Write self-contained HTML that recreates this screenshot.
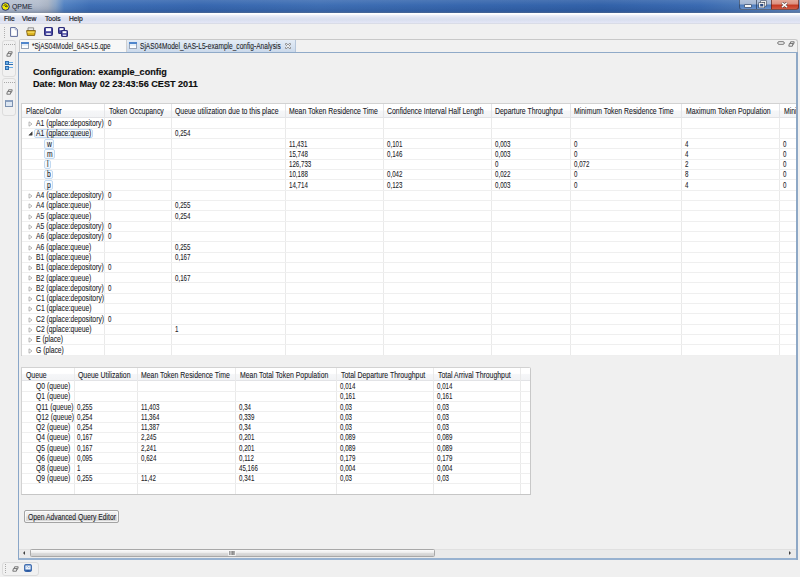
<!DOCTYPE html><html><head><meta charset="utf-8"><style>
*{margin:0;padding:0;box-sizing:border-box}
html,body{width:800px;height:577px;overflow:hidden;background:#f0f0f0;font-family:"Liberation Sans",sans-serif;color:#1c1c1c}
div,span{position:absolute;white-space:nowrap}
.t,.h,.n{font-size:8px;line-height:8px;color:#1c1c26;-webkit-text-stroke:0.08px #1c1c26;transform-origin:0 0;transform:scale(0.845,1.1)}
.n{transform:scale(0.77,1.1)}
.h{transform:scale(0.862,1.1)}
.h{color:#1a1a28}
.vl{width:1px;background:#ebebeb}
.hl{height:1px;background:#ececec}
</style></head><body>
<div style="left:0;top:0;width:800px;height:12.6px;background:linear-gradient(90deg,#b9c3d3 0,#b3bdcd 38px,#a9b3c3 48px,#86a2c6 56px,#5282c2 64px,#3e6fb6 90px,#3868b0 200px,#3f6fb4 320px,#3767ae 460px,#3262a9 600px,#3b6bb2 700px,#4a78b8 740px,#6a90c4 800px)"></div>
<div style="left:0;top:0;width:800px;height:12.6px;background:linear-gradient(rgba(255,255,255,0.10) 0,rgba(255,255,255,0) 40%,rgba(0,20,60,0.08) 70%,rgba(0,30,90,0.18) 85%,rgba(90,100,120,0.5) 100%)"></div>
<svg style="position:absolute;left:0.5px;top:1.5px" width="9" height="9" viewBox="0 0 9 9"><circle cx="4.5" cy="4.5" r="3.8" fill="#f0e800" stroke="#1c2a78" stroke-width="1"/><path d="M2.6 3.6 Q4 2.2 5.6 3.2 L6.4 4.6 Q5 5.2 4 4.2" fill="none" stroke="#3a3a10" stroke-width="0.9"/></svg>
<div style="left:12px;top:1.6px;font-size:8px;line-height:9px;color:#1e2838;-webkit-text-stroke:0.1px #1e2838;transform-origin:0 0;transform:scaleX(0.86)">QPME</div>
<div style="left:739px;top:0;width:16.5px;height:9.5px;border:1px solid rgba(30,45,70,0.6);border-top:0;border-right:0;border-radius:0 0 0 3px;background:linear-gradient(#b2c2da 0,#a6b8d4 45%,#4e7cbc 55%,#6a92cc 100%)"></div>
<div style="left:755.5px;top:0;width:15.5px;height:9.5px;border:1px solid rgba(30,45,70,0.6);border-top:0;border-right:0;background:linear-gradient(#b2c2da 0,#a6b8d4 45%,#4e7cbc 55%,#6a92cc 100%)"></div>
<div style="left:771px;top:0;width:27.5px;height:9.5px;border:1px solid rgba(70,30,30,0.65);border-top:0;border-radius:0 0 3px 0;background:linear-gradient(#e4a898 0,#dc9080 45%,#c43820 56%,#d05a44 100%)"></div>
<div style="left:744.5px;top:4.5px;width:6px;height:2.2px;background:#f6f6f6;box-shadow:0 0 0 0.6px #4a5060"></div>
<svg style="position:absolute;left:758px;top:0px" width="10" height="9" viewBox="0 0 10 9"><rect x="3.4" y="1.6" width="4.2" height="3.6" fill="none" stroke="#3c4454" stroke-width="2.2"/><rect x="3.4" y="1.6" width="4.2" height="3.6" fill="none" stroke="#f4f4f4" stroke-width="1.1"/><rect x="1.6" y="3.4" width="4.2" height="3.6" fill="#3c4454" stroke="#3c4454" stroke-width="2.2"/><rect x="1.6" y="3.4" width="4.2" height="3.6" fill="#2c4c84" stroke="#f4f4f4" stroke-width="1.1"/></svg>
<svg style="position:absolute;left:781px;top:1.5px" width="7" height="6" viewBox="0 0 7 6"><path d="M1 0.8L6 5.2M6 0.8L1 5.2" stroke="#503030" stroke-width="2.6"/><path d="M1 0.8L6 5.2M6 0.8L1 5.2" stroke="#fafafa" stroke-width="1.6"/></svg>
<div style="left:0;top:12.6px;width:800px;height:11.2px;background:linear-gradient(#ffffff 0,#ffffff 1.3px,#eef0f8 2px,#dde2f1 45%,#d9dfef 62%,#e3e6f5 86%,#d4d7e0 100%)"></div>
<div class="t" style="left:4px;top:15.1px;transform:scale(0.84,1.0);-webkit-text-stroke:0.2px #1c1c26">File</div>
<div class="t" style="left:22px;top:15.1px;transform:scale(0.84,1.0);-webkit-text-stroke:0.2px #1c1c26">View</div>
<div class="t" style="left:45px;top:15.1px;transform:scale(0.84,1.0);-webkit-text-stroke:0.2px #1c1c26">Tools</div>
<div class="t" style="left:69px;top:15.1px;transform:scale(0.84,1.0);-webkit-text-stroke:0.2px #1c1c26">Help</div>
<div style="left:3.5px;top:26.5px;width:1px;height:1px;background:#b0b0b0"></div>
<div style="left:3.5px;top:28.5px;width:1px;height:1px;background:#b0b0b0"></div>
<div style="left:3.5px;top:30.5px;width:1px;height:1px;background:#b0b0b0"></div>
<div style="left:3.5px;top:32.5px;width:1px;height:1px;background:#b0b0b0"></div>
<div style="left:3.5px;top:34.5px;width:1px;height:1px;background:#b0b0b0"></div>
<div style="left:3.5px;top:36.5px;width:1px;height:1px;background:#b0b0b0"></div>
<svg style="position:absolute;left:10px;top:26.5px" width="8" height="10" viewBox="0 0 8 10"><path d="M0.6 0.6H5.4L7.4 2.6V9.4H0.6Z" fill="#fdfdfd" stroke="#5c6a9a" stroke-width="1"/><path d="M5.2 0.8V2.8H7.2" fill="none" stroke="#8a94b8" stroke-width="0.7"/></svg>
<svg style="position:absolute;left:26px;top:26.5px" width="10" height="9" viewBox="0 0 10 9"><path d="M2 0.8H7.6V4H2Z" fill="#e8e8e8" stroke="#7a7a7a" stroke-width="0.8"/><path d="M0.6 3.6H9.4L8.6 8.4H1.4Z" fill="#e0b820" stroke="#7a5a10" stroke-width="0.9"/><path d="M1.4 5.2H8.6" stroke="#f8e070" stroke-width="1"/></svg>
<svg style="position:absolute;left:44px;top:26.5px" width="9" height="9" viewBox="0 0 9 9"><rect x="0.5" y="0.5" width="8" height="8" rx="0.8" fill="#4848a0" stroke="#2a2a78" stroke-width="1"/><rect x="2" y="1.2" width="5" height="3" fill="#ffffff"/><rect x="2.2" y="6" width="4.6" height="2" fill="#d8d8ec"/></svg>
<svg style="position:absolute;left:57.5px;top:26.5px" width="10" height="10" viewBox="0 0 10 10"><rect x="0.5" y="0.5" width="6" height="6" rx="0.6" fill="#4848a0" stroke="#2a2a78" stroke-width="1"/><rect x="1.6" y="1.2" width="3.8" height="2" fill="#fff"/><rect x="3.5" y="3.5" width="6" height="6" rx="0.6" fill="#4848a0" stroke="#2a2a78" stroke-width="1"/><rect x="4.6" y="4.2" width="3.8" height="2" fill="#fff"/><rect x="4.8" y="7.6" width="3.4" height="1.4" fill="#d8d8ec"/></svg>
<div style="left:1.5px;top:40px;width:14.5px;height:36.5px;border:1px solid #dcdcdc;border-radius:3px;background:#f1f1f1"></div>
<div style="left:4px;top:43.5px;width:1px;height:1px;background:#a8a8a8"></div>
<div style="left:6px;top:43.5px;width:1px;height:1px;background:#a8a8a8"></div>
<div style="left:8px;top:43.5px;width:1px;height:1px;background:#a8a8a8"></div>
<div style="left:10px;top:43.5px;width:1px;height:1px;background:#a8a8a8"></div>
<div style="left:12px;top:43.5px;width:1px;height:1px;background:#a8a8a8"></div>
<div style="left:14px;top:43.5px;width:1px;height:1px;background:#a8a8a8"></div>
<svg style="position:absolute;left:5.5px;top:51px" width="7" height="6" viewBox="0 0 7 6"><path d="M2.6 0.8H6.2L5.6 3.2H2Z" fill="#f4f4f4" stroke="#6a6a6a" stroke-width="0.9" stroke-linejoin="round"/><path d="M1.4 2.6H5L4.4 5.2H0.8Z" fill="#f4f4f4" stroke="#6a6a6a" stroke-width="0.9" stroke-linejoin="round"/></svg>
<div style="left:5px;top:61px;width:3.5px;height:3.5px;background:#6aaee8;border:0.5px solid #2d6db0"></div><div style="left:5px;top:66px;width:3.5px;height:3.5px;background:#6aaee8;border:0.5px solid #2d6db0"></div><div style="left:9px;top:62px;width:4px;height:1px;background:#6aaee8"></div><div style="left:9px;top:64px;width:4px;height:1px;background:#2d6db0"></div><div style="left:9px;top:67px;width:4px;height:1px;background:#6aaee8"></div>
<div style="left:1.5px;top:78px;width:14.5px;height:37.5px;border:1px solid #dcdcdc;border-radius:3px;background:#f1f1f1"></div>
<div style="left:4px;top:81.5px;width:1px;height:1px;background:#a8a8a8"></div>
<div style="left:6px;top:81.5px;width:1px;height:1px;background:#a8a8a8"></div>
<div style="left:8px;top:81.5px;width:1px;height:1px;background:#a8a8a8"></div>
<div style="left:10px;top:81.5px;width:1px;height:1px;background:#a8a8a8"></div>
<div style="left:12px;top:81.5px;width:1px;height:1px;background:#a8a8a8"></div>
<div style="left:14px;top:81.5px;width:1px;height:1px;background:#a8a8a8"></div>
<svg style="position:absolute;left:5.5px;top:89px" width="7" height="6" viewBox="0 0 7 6"><path d="M2.6 0.8H6.2L5.6 3.2H2Z" fill="#f4f4f4" stroke="#6a6a6a" stroke-width="0.9" stroke-linejoin="round"/><path d="M1.4 2.6H5L4.4 5.2H0.8Z" fill="#f4f4f4" stroke="#6a6a6a" stroke-width="0.9" stroke-linejoin="round"/></svg>
<div style="left:5px;top:100px;width:8px;height:7px;background:#dce6f2;border:1px solid #7a90b0;border-top:2px solid #8aa0c0"></div>
<div style="left:18.5px;top:39px;width:779px;height:15px;border:1px solid #c8c8c8;border-bottom:0;border-radius:2px 3px 0 0;background:#f1f1f1"></div>
<div style="left:19.5px;top:39.8px;width:107px;height:13px;background:#f7f7f7;border-right:1px solid #d0d0d0"></div>
<div style="left:127px;top:39.8px;width:169px;height:13px;background:linear-gradient(#e4ecf6,#c9d8ea);border-right:1px solid #b6c6da"></div>
<svg style="position:absolute;left:21px;top:42px" width="8" height="7" viewBox="0 0 8 7"><rect x="0.5" y="0.5" width="7" height="6" fill="#fbfdff" stroke="#98a4b6" stroke-width="1"/><rect x="0" y="0" width="8" height="2" fill="#4f86cc"/><rect x="1" y="2" width="6" height="2" fill="#e4eef8"/></svg>
<svg style="position:absolute;left:129px;top:42px" width="8" height="7" viewBox="0 0 8 7"><rect x="0.5" y="0.5" width="7" height="6" fill="#fbfdff" stroke="#98a4b6" stroke-width="1"/><rect x="0" y="0" width="8" height="2" fill="#4f86cc"/><rect x="1" y="2" width="6" height="2" fill="#e4eef8"/></svg>
<div class="t" style="left:32px;top:42.7px;transform:scale(0.80,1.06)">*SjAS04Model_6AS-L5.qpe</div>
<div class="t" style="left:140px;top:42.7px;transform:scale(0.824,1.06)">SjAS04Model_6AS-L5-example_config-Analysis</div>
<svg style="position:absolute;left:285px;top:43px" width="6" height="6" viewBox="0 0 6 6"><path d="M1 1L5 5M5 1L1 5" stroke="#8a8a8a" stroke-width="2" stroke-linecap="round"/><path d="M1.1 1.1L4.9 4.9M4.9 1.1L1.1 4.9" stroke="#f6f6f6" stroke-width="0.9" stroke-linecap="round"/></svg>
<svg style="position:absolute;left:777px;top:41px" width="8" height="4" viewBox="0 0 8 4"><rect x="0.7" y="0.7" width="6.6" height="2.6" rx="1.3" fill="#f4f4f4" stroke="#777" stroke-width="1"/></svg>
<svg style="position:absolute;left:787.5px;top:41px" width="7" height="6" viewBox="0 0 7 6"><path d="M2.6 0.8H6.2L5.6 3.2H2Z" fill="#f4f4f4" stroke="#666" stroke-width="0.9"/><path d="M1.4 2.6H5L4.4 5.2H0.8Z" fill="#f4f4f4" stroke="#666" stroke-width="0.9"/></svg>
<div style="left:18px;top:52px;width:779.5px;height:507.7px;border:1.2px solid #8aa6c8;border-top:1.2px solid #90aac8;border-bottom:2px solid #98b2d0;background:#f0f0f0"></div>
<div style="left:33px;top:66.8px;font-size:9.1px;line-height:11px;font-weight:bold;color:#0c0c0c;-webkit-text-stroke:0.15px #0c0c0c">Configuration: example_config</div>
<div style="left:33px;top:79.3px;font-size:9.1px;line-height:11px;font-weight:bold;color:#0c0c0c;-webkit-text-stroke:0.15px #0c0c0c">Date: Mon May 02 23:43:56 CEST 2011</div>
<div style="left:21px;top:103px;width:778.5px;height:252.5px;background:#fff;border:1px solid #d2d2d2;border-bottom-color:#c6c6c6;border-right:0"></div>
<div style="left:22px;top:104px;width:775.5px;height:14.0px;background:linear-gradient(#ffffff 0,#ffffff 45%,#f5f6f8 55%,#f2f3f5 100%);border-bottom:1px solid #e2e3e6"></div>
<div class="vl" style="left:104.0px;top:104px;height:251.5px;background:#eaeaea"></div>
<div class="vl" style="left:104.0px;top:104px;height:14.0px;background:#e4e5e8"></div>
<div class="vl" style="left:170.8px;top:104px;height:251.5px;background:#eaeaea"></div>
<div class="vl" style="left:170.8px;top:104px;height:14.0px;background:#e4e5e8"></div>
<div class="vl" style="left:284.8px;top:104px;height:251.5px;background:#eaeaea"></div>
<div class="vl" style="left:284.8px;top:104px;height:14.0px;background:#e4e5e8"></div>
<div class="vl" style="left:383.3px;top:104px;height:251.5px;background:#eaeaea"></div>
<div class="vl" style="left:383.3px;top:104px;height:14.0px;background:#e4e5e8"></div>
<div class="vl" style="left:490.9px;top:104px;height:251.5px;background:#eaeaea"></div>
<div class="vl" style="left:490.9px;top:104px;height:14.0px;background:#e4e5e8"></div>
<div class="vl" style="left:569.9px;top:104px;height:251.5px;background:#eaeaea"></div>
<div class="vl" style="left:569.9px;top:104px;height:14.0px;background:#e4e5e8"></div>
<div class="vl" style="left:681.4px;top:104px;height:251.5px;background:#eaeaea"></div>
<div class="vl" style="left:681.4px;top:104px;height:14.0px;background:#e4e5e8"></div>
<div class="vl" style="left:779.1px;top:104px;height:251.5px;background:#eaeaea"></div>
<div class="vl" style="left:779.1px;top:104px;height:14.0px;background:#e4e5e8"></div>
<div class="h" style="left:26px;top:107.4px">Place/Color</div>
<div class="h" style="left:108.8px;top:107.4px">Token Occupancy</div>
<div class="h" style="left:175px;top:107.4px">Queue utilization due to this place</div>
<div class="h" style="left:289px;top:107.4px">Mean Token Residence Time</div>
<div class="h" style="left:387.4px;top:107.4px">Confidence Interval Half Length</div>
<div class="h" style="left:495px;top:107.4px">Departure Throughput</div>
<div class="h" style="left:574px;top:107.4px">Minimum Token Residence Time</div>
<div class="h" style="left:685.8px;top:107.4px">Maximum Token Population</div>
<div class="h" style="left:783.5px;top:107.4px">Minimum Token Population</div>
<div class="hl" style="left:22px;top:127.81px;width:775.5px;background:#efefef"></div>
<svg style="position:absolute;left:27.5px;top:120.8px" width="5" height="6" viewBox="0 0 5 6"><path d="M1 0.8L4 3L1 5.2Z" fill="#fcfcfc" stroke="#a6a6a6" stroke-width="0.8" stroke-linejoin="round"/></svg>
<div class="t" style="left:36px;top:118.9px">A1 (qplace:depository)</div>
<div class="n" style="left:107.8px;top:118.9px">0</div>
<div class="hl" style="left:22px;top:138.12px;width:775.5px;background:#efefef"></div>
<svg style="position:absolute;left:27.5px;top:131.31px" width="5" height="5" viewBox="0 0 5 5"><path d="M4.2 0.8V4.2H0.8Z" fill="#3a3a3a" stroke="#3a3a3a" stroke-width="0.5" stroke-linejoin="round"/></svg>
<div style="left:33.5px;top:128.61px;width:59.5px;height:9.6px;border:1px solid #c2daf2;border-radius:2px;background:linear-gradient(#f7fbff,#e6f0fb);box-shadow:inset 0 0 0 0.5px #fafdff"></div>
<div class="t" style="left:36px;top:129.21px">A1 (qplace:queue)</div>
<div class="n" style="left:174.60000000000002px;top:129.21px">0,254</div>
<div class="hl" style="left:22px;top:148.43px;width:775.5px;background:#efefef"></div>
<div style="left:44.4px;top:138.92000000000002px;width:10px;height:9.6px;border:1px solid #c2daf2;border-radius:2px;background:linear-gradient(#f7fbff,#e6f0fb);box-shadow:inset 0 0 0 0.5px #fafdff"></div>
<div class="t" style="left:47px;top:139.52px">w</div>
<div class="n" style="left:288.6px;top:139.52px">11,431</div>
<div class="n" style="left:387.1px;top:139.52px">0,101</div>
<div class="n" style="left:494.7px;top:139.52px">0,003</div>
<div class="n" style="left:573.6999999999999px;top:139.52px">0</div>
<div class="n" style="left:685.1999999999999px;top:139.52px">4</div>
<div class="n" style="left:782.9px;top:139.52px">0</div>
<div class="hl" style="left:22px;top:158.74px;width:775.5px;background:#efefef"></div>
<div style="left:44.4px;top:149.23000000000002px;width:11px;height:9.6px;border:1px solid #c2daf2;border-radius:2px;background:linear-gradient(#f7fbff,#e6f0fb);box-shadow:inset 0 0 0 0.5px #fafdff"></div>
<div class="t" style="left:47px;top:149.83px">m</div>
<div class="n" style="left:288.6px;top:149.83px">15,748</div>
<div class="n" style="left:387.1px;top:149.83px">0,146</div>
<div class="n" style="left:494.7px;top:149.83px">0,003</div>
<div class="n" style="left:573.6999999999999px;top:149.83px">0</div>
<div class="n" style="left:685.1999999999999px;top:149.83px">4</div>
<div class="n" style="left:782.9px;top:149.83px">0</div>
<div class="hl" style="left:22px;top:169.05px;width:775.5px;background:#efefef"></div>
<div style="left:44.4px;top:159.54000000000002px;width:6.8px;height:9.6px;border:1px solid #c2daf2;border-radius:2px;background:linear-gradient(#f7fbff,#e6f0fb);box-shadow:inset 0 0 0 0.5px #fafdff"></div>
<div class="t" style="left:47px;top:160.14000000000001px">l</div>
<div class="n" style="left:288.6px;top:160.14000000000001px">126,733</div>
<div class="n" style="left:494.7px;top:160.14000000000001px">0</div>
<div class="n" style="left:573.6999999999999px;top:160.14000000000001px">0,072</div>
<div class="n" style="left:685.1999999999999px;top:160.14000000000001px">2</div>
<div class="n" style="left:782.9px;top:160.14000000000001px">0</div>
<div class="hl" style="left:22px;top:179.36px;width:775.5px;background:#efefef"></div>
<div style="left:44.4px;top:169.85000000000002px;width:9px;height:9.6px;border:1px solid #c2daf2;border-radius:2px;background:linear-gradient(#f7fbff,#e6f0fb);box-shadow:inset 0 0 0 0.5px #fafdff"></div>
<div class="t" style="left:47px;top:170.45000000000002px">b</div>
<div class="n" style="left:288.6px;top:170.45000000000002px">10,188</div>
<div class="n" style="left:387.1px;top:170.45000000000002px">0,042</div>
<div class="n" style="left:494.7px;top:170.45000000000002px">0,022</div>
<div class="n" style="left:573.6999999999999px;top:170.45000000000002px">0</div>
<div class="n" style="left:685.1999999999999px;top:170.45000000000002px">8</div>
<div class="n" style="left:782.9px;top:170.45000000000002px">0</div>
<div class="hl" style="left:22px;top:189.67000000000002px;width:775.5px;background:#efefef"></div>
<div style="left:44.4px;top:180.16000000000003px;width:8.8px;height:9.6px;border:1px solid #c2daf2;border-radius:2px;background:linear-gradient(#f7fbff,#e6f0fb);box-shadow:inset 0 0 0 0.5px #fafdff"></div>
<div class="t" style="left:47px;top:180.76000000000002px">p</div>
<div class="n" style="left:288.6px;top:180.76000000000002px">14,714</div>
<div class="n" style="left:387.1px;top:180.76000000000002px">0,123</div>
<div class="n" style="left:494.7px;top:180.76000000000002px">0,003</div>
<div class="n" style="left:573.6999999999999px;top:180.76000000000002px">0</div>
<div class="n" style="left:685.1999999999999px;top:180.76000000000002px">4</div>
<div class="n" style="left:782.9px;top:180.76000000000002px">0</div>
<div class="hl" style="left:22px;top:199.98000000000002px;width:775.5px;background:#efefef"></div>
<svg style="position:absolute;left:27.5px;top:192.97000000000003px" width="5" height="6" viewBox="0 0 5 6"><path d="M1 0.8L4 3L1 5.2Z" fill="#fcfcfc" stroke="#a6a6a6" stroke-width="0.8" stroke-linejoin="round"/></svg>
<div class="t" style="left:36px;top:191.07000000000002px">A4 (qplace:depository)</div>
<div class="n" style="left:107.8px;top:191.07000000000002px">0</div>
<div class="hl" style="left:22px;top:210.29000000000002px;width:775.5px;background:#efefef"></div>
<svg style="position:absolute;left:27.5px;top:203.28000000000003px" width="5" height="6" viewBox="0 0 5 6"><path d="M1 0.8L4 3L1 5.2Z" fill="#fcfcfc" stroke="#a6a6a6" stroke-width="0.8" stroke-linejoin="round"/></svg>
<div class="t" style="left:36px;top:201.38000000000002px">A4 (qplace:queue)</div>
<div class="n" style="left:174.60000000000002px;top:201.38000000000002px">0,255</div>
<div class="hl" style="left:22px;top:220.60000000000002px;width:775.5px;background:#efefef"></div>
<svg style="position:absolute;left:27.5px;top:213.59000000000003px" width="5" height="6" viewBox="0 0 5 6"><path d="M1 0.8L4 3L1 5.2Z" fill="#fcfcfc" stroke="#a6a6a6" stroke-width="0.8" stroke-linejoin="round"/></svg>
<div class="t" style="left:36px;top:211.69000000000003px">A5 (qplace:queue)</div>
<div class="n" style="left:174.60000000000002px;top:211.69000000000003px">0,254</div>
<div class="hl" style="left:22px;top:230.91000000000003px;width:775.5px;background:#efefef"></div>
<svg style="position:absolute;left:27.5px;top:223.90000000000003px" width="5" height="6" viewBox="0 0 5 6"><path d="M1 0.8L4 3L1 5.2Z" fill="#fcfcfc" stroke="#a6a6a6" stroke-width="0.8" stroke-linejoin="round"/></svg>
<div class="t" style="left:36px;top:222.00000000000003px">A5 (qplace:depository)</div>
<div class="n" style="left:107.8px;top:222.00000000000003px">0</div>
<div class="hl" style="left:22px;top:241.22000000000003px;width:775.5px;background:#efefef"></div>
<svg style="position:absolute;left:27.5px;top:234.21000000000004px" width="5" height="6" viewBox="0 0 5 6"><path d="M1 0.8L4 3L1 5.2Z" fill="#fcfcfc" stroke="#a6a6a6" stroke-width="0.8" stroke-linejoin="round"/></svg>
<div class="t" style="left:36px;top:232.31000000000003px">A6 (qplace:depository)</div>
<div class="n" style="left:107.8px;top:232.31000000000003px">0</div>
<div class="hl" style="left:22px;top:251.53px;width:775.5px;background:#efefef"></div>
<svg style="position:absolute;left:27.5px;top:244.52px" width="5" height="6" viewBox="0 0 5 6"><path d="M1 0.8L4 3L1 5.2Z" fill="#fcfcfc" stroke="#a6a6a6" stroke-width="0.8" stroke-linejoin="round"/></svg>
<div class="t" style="left:36px;top:242.62px">A6 (qplace:queue)</div>
<div class="n" style="left:174.60000000000002px;top:242.62px">0,255</div>
<div class="hl" style="left:22px;top:261.84px;width:775.5px;background:#efefef"></div>
<svg style="position:absolute;left:27.5px;top:254.83px" width="5" height="6" viewBox="0 0 5 6"><path d="M1 0.8L4 3L1 5.2Z" fill="#fcfcfc" stroke="#a6a6a6" stroke-width="0.8" stroke-linejoin="round"/></svg>
<div class="t" style="left:36px;top:252.93px">B1 (qplace:queue)</div>
<div class="n" style="left:174.60000000000002px;top:252.93px">0,167</div>
<div class="hl" style="left:22px;top:272.15000000000003px;width:775.5px;background:#efefef"></div>
<svg style="position:absolute;left:27.5px;top:265.14000000000004px" width="5" height="6" viewBox="0 0 5 6"><path d="M1 0.8L4 3L1 5.2Z" fill="#fcfcfc" stroke="#a6a6a6" stroke-width="0.8" stroke-linejoin="round"/></svg>
<div class="t" style="left:36px;top:263.24px">B1 (qplace:depository)</div>
<div class="n" style="left:107.8px;top:263.24px">0</div>
<div class="hl" style="left:22px;top:282.46px;width:775.5px;background:#efefef"></div>
<svg style="position:absolute;left:27.5px;top:275.45px" width="5" height="6" viewBox="0 0 5 6"><path d="M1 0.8L4 3L1 5.2Z" fill="#fcfcfc" stroke="#a6a6a6" stroke-width="0.8" stroke-linejoin="round"/></svg>
<div class="t" style="left:36px;top:273.54999999999995px">B2 (qplace:queue)</div>
<div class="n" style="left:174.60000000000002px;top:273.54999999999995px">0,167</div>
<div class="hl" style="left:22px;top:292.77000000000004px;width:775.5px;background:#efefef"></div>
<svg style="position:absolute;left:27.5px;top:285.76000000000005px" width="5" height="6" viewBox="0 0 5 6"><path d="M1 0.8L4 3L1 5.2Z" fill="#fcfcfc" stroke="#a6a6a6" stroke-width="0.8" stroke-linejoin="round"/></svg>
<div class="t" style="left:36px;top:283.86px">B2 (qplace:depository)</div>
<div class="n" style="left:107.8px;top:283.86px">0</div>
<div class="hl" style="left:22px;top:303.08px;width:775.5px;background:#efefef"></div>
<svg style="position:absolute;left:27.5px;top:296.07px" width="5" height="6" viewBox="0 0 5 6"><path d="M1 0.8L4 3L1 5.2Z" fill="#fcfcfc" stroke="#a6a6a6" stroke-width="0.8" stroke-linejoin="round"/></svg>
<div class="t" style="left:36px;top:294.16999999999996px">C1 (qplace:depository)</div>
<div class="hl" style="left:22px;top:313.39000000000004px;width:775.5px;background:#efefef"></div>
<svg style="position:absolute;left:27.5px;top:306.38000000000005px" width="5" height="6" viewBox="0 0 5 6"><path d="M1 0.8L4 3L1 5.2Z" fill="#fcfcfc" stroke="#a6a6a6" stroke-width="0.8" stroke-linejoin="round"/></svg>
<div class="t" style="left:36px;top:304.48px">C1 (qplace:queue)</div>
<div class="hl" style="left:22px;top:323.7px;width:775.5px;background:#efefef"></div>
<svg style="position:absolute;left:27.5px;top:316.69px" width="5" height="6" viewBox="0 0 5 6"><path d="M1 0.8L4 3L1 5.2Z" fill="#fcfcfc" stroke="#a6a6a6" stroke-width="0.8" stroke-linejoin="round"/></svg>
<div class="t" style="left:36px;top:314.78999999999996px">C2 (qplace:depository)</div>
<div class="n" style="left:107.8px;top:314.78999999999996px">0</div>
<div class="hl" style="left:22px;top:334.01000000000005px;width:775.5px;background:#efefef"></div>
<svg style="position:absolute;left:27.5px;top:327.00000000000006px" width="5" height="6" viewBox="0 0 5 6"><path d="M1 0.8L4 3L1 5.2Z" fill="#fcfcfc" stroke="#a6a6a6" stroke-width="0.8" stroke-linejoin="round"/></svg>
<div class="t" style="left:36px;top:325.1px">C2 (qplace:queue)</div>
<div class="n" style="left:174.60000000000002px;top:325.1px">1</div>
<div class="hl" style="left:22px;top:344.32px;width:775.5px;background:#efefef"></div>
<svg style="position:absolute;left:27.5px;top:337.31px" width="5" height="6" viewBox="0 0 5 6"><path d="M1 0.8L4 3L1 5.2Z" fill="#fcfcfc" stroke="#a6a6a6" stroke-width="0.8" stroke-linejoin="round"/></svg>
<div class="t" style="left:36px;top:335.40999999999997px">E (place)</div>
<div class="hl" style="left:22px;top:354.63000000000005px;width:775.5px;background:#efefef"></div>
<svg style="position:absolute;left:27.5px;top:347.62000000000006px" width="5" height="6" viewBox="0 0 5 6"><path d="M1 0.8L4 3L1 5.2Z" fill="#fcfcfc" stroke="#a6a6a6" stroke-width="0.8" stroke-linejoin="round"/></svg>
<div class="t" style="left:36px;top:345.72px">G (place)</div>
<div style="left:796.3px;top:53px;width:4px;height:507px;background:#f0f0f0"></div>
<div style="left:796px;top:52.5px;width:1.6px;height:507px;background:#8ea8c6"></div>
<div style="left:21px;top:366.5px;width:509.5px;height:128.5px;background:#fff;border:1px solid #d2d2d2;border-bottom-color:#c6c6c6;border-right-color:#c8c8c8;border-radius:0 2px 0 0"></div>
<div style="left:22px;top:367.5px;width:507.5px;height:13.5px;background:linear-gradient(#ffffff 0,#ffffff 45%,#f5f6f8 55%,#f2f3f5 100%);border-bottom:1px solid #e2e3e6"></div>
<div class="vl" style="left:73.5px;top:367.5px;height:126.5px;background:#eaeaea"></div>
<div class="vl" style="left:137.0px;top:367.5px;height:126.5px;background:#eaeaea"></div>
<div class="vl" style="left:235.0px;top:367.5px;height:126.5px;background:#eaeaea"></div>
<div class="vl" style="left:335.8px;top:367.5px;height:126.5px;background:#eaeaea"></div>
<div class="vl" style="left:433.0px;top:367.5px;height:126.5px;background:#eaeaea"></div>
<div class="vl" style="left:519.6px;top:367.5px;height:126.5px;background:#eaeaea"></div>
<div class="h" style="left:26px;top:371.1px">Queue</div>
<div class="h" style="left:78.2px;top:371.1px">Queue Utilization</div>
<div class="h" style="left:141px;top:371.1px">Mean Token Residence Time</div>
<div class="h" style="left:240px;top:371.1px">Mean Total Token Population</div>
<div class="h" style="left:340.5px;top:371.1px">Total Departure Throughput</div>
<div class="h" style="left:437.5px;top:371.1px">Total Arrival Throughput</div>
<div class="hl" style="left:22px;top:390.75px;width:507.5px;background:#efefef"></div>
<div style="left:22.5px;top:381.0px;width:51px;height:10.25px;overflow:hidden"><div class="t" style="left:13.5px;top:1.1px">Q0 (queue)</div></div>
<div class="n" style="left:339.6px;top:382.1px">0,014</div>
<div class="n" style="left:436.8px;top:382.1px">0,014</div>
<div class="hl" style="left:22px;top:401.0px;width:507.5px;background:#efefef"></div>
<div style="left:22.5px;top:391.25px;width:51px;height:10.25px;overflow:hidden"><div class="t" style="left:13.5px;top:1.1px">Q1 (queue)</div></div>
<div class="n" style="left:339.6px;top:392.35px">0,161</div>
<div class="n" style="left:436.8px;top:392.35px">0,161</div>
<div class="hl" style="left:22px;top:411.25px;width:507.5px;background:#efefef"></div>
<div style="left:22.5px;top:401.5px;width:51px;height:10.25px;overflow:hidden"><div class="t" style="left:13.5px;top:1.1px">Q11 (queue)</div></div>
<div class="n" style="left:77.3px;top:402.6px">0,255</div>
<div class="n" style="left:140.8px;top:402.6px">11,403</div>
<div class="n" style="left:238.8px;top:402.6px">0,34</div>
<div class="n" style="left:339.6px;top:402.6px">0,03</div>
<div class="n" style="left:436.8px;top:402.6px">0,03</div>
<div class="hl" style="left:22px;top:421.5px;width:507.5px;background:#efefef"></div>
<div style="left:22.5px;top:411.75px;width:51px;height:10.25px;overflow:hidden"><div class="t" style="left:13.5px;top:1.1px">Q12 (queue)</div></div>
<div class="n" style="left:77.3px;top:412.85px">0,254</div>
<div class="n" style="left:140.8px;top:412.85px">11,364</div>
<div class="n" style="left:238.8px;top:412.85px">0,339</div>
<div class="n" style="left:339.6px;top:412.85px">0,03</div>
<div class="n" style="left:436.8px;top:412.85px">0,03</div>
<div class="hl" style="left:22px;top:431.75px;width:507.5px;background:#efefef"></div>
<div style="left:22.5px;top:422.0px;width:51px;height:10.25px;overflow:hidden"><div class="t" style="left:13.5px;top:1.1px">Q2 (queue)</div></div>
<div class="n" style="left:77.3px;top:423.1px">0,254</div>
<div class="n" style="left:140.8px;top:423.1px">11,387</div>
<div class="n" style="left:238.8px;top:423.1px">0,34</div>
<div class="n" style="left:339.6px;top:423.1px">0,03</div>
<div class="n" style="left:436.8px;top:423.1px">0,03</div>
<div class="hl" style="left:22px;top:442.0px;width:507.5px;background:#efefef"></div>
<div style="left:22.5px;top:432.25px;width:51px;height:10.25px;overflow:hidden"><div class="t" style="left:13.5px;top:1.1px">Q4 (queue)</div></div>
<div class="n" style="left:77.3px;top:433.35px">0,167</div>
<div class="n" style="left:140.8px;top:433.35px">2,245</div>
<div class="n" style="left:238.8px;top:433.35px">0,201</div>
<div class="n" style="left:339.6px;top:433.35px">0,089</div>
<div class="n" style="left:436.8px;top:433.35px">0,089</div>
<div class="hl" style="left:22px;top:452.25px;width:507.5px;background:#efefef"></div>
<div style="left:22.5px;top:442.5px;width:51px;height:10.25px;overflow:hidden"><div class="t" style="left:13.5px;top:1.1px">Q5 (queue)</div></div>
<div class="n" style="left:77.3px;top:443.6px">0,167</div>
<div class="n" style="left:140.8px;top:443.6px">2,241</div>
<div class="n" style="left:238.8px;top:443.6px">0,201</div>
<div class="n" style="left:339.6px;top:443.6px">0,089</div>
<div class="n" style="left:436.8px;top:443.6px">0,089</div>
<div class="hl" style="left:22px;top:462.5px;width:507.5px;background:#efefef"></div>
<div style="left:22.5px;top:452.75px;width:51px;height:10.25px;overflow:hidden"><div class="t" style="left:13.5px;top:1.1px">Q6 (queue)</div></div>
<div class="n" style="left:77.3px;top:453.85px">0,095</div>
<div class="n" style="left:140.8px;top:453.85px">0,624</div>
<div class="n" style="left:238.8px;top:453.85px">0,112</div>
<div class="n" style="left:339.6px;top:453.85px">0,179</div>
<div class="n" style="left:436.8px;top:453.85px">0,179</div>
<div class="hl" style="left:22px;top:472.75px;width:507.5px;background:#efefef"></div>
<div style="left:22.5px;top:463.0px;width:51px;height:10.25px;overflow:hidden"><div class="t" style="left:13.5px;top:1.1px">Q8 (queue)</div></div>
<div class="n" style="left:77.3px;top:464.1px">1</div>
<div class="n" style="left:238.8px;top:464.1px">45,166</div>
<div class="n" style="left:339.6px;top:464.1px">0,004</div>
<div class="n" style="left:436.8px;top:464.1px">0,004</div>
<div class="hl" style="left:22px;top:483.0px;width:507.5px;background:#efefef"></div>
<div style="left:22.5px;top:473.25px;width:51px;height:10.25px;overflow:hidden"><div class="t" style="left:13.5px;top:1.1px">Q9 (queue)</div></div>
<div class="n" style="left:77.3px;top:474.35px">0,255</div>
<div class="n" style="left:140.8px;top:474.35px">11,42</div>
<div class="n" style="left:238.8px;top:474.35px">0,341</div>
<div class="n" style="left:339.6px;top:474.35px">0,03</div>
<div class="n" style="left:436.8px;top:474.35px">0,03</div>
<div style="left:24.3px;top:510px;width:94.5px;height:13.3px;border:1px solid #a4a4a4;border-radius:2px;background:linear-gradient(#f4f4f4 0,#ececec 48%,#dedede 52%,#d6d6d6 100%);box-shadow:inset 0 0 0 1px rgba(255,255,255,0.7)"></div>
<div class="t" style="left:27.7px;top:512.5px">Open Advanced Query Editor</div>
<div style="left:19px;top:549px;width:777px;height:9px;background:#eaeaea;border-top:0.5px solid #e0e0e0"></div>
<div style="left:23px;top:551px;width:0;height:0;border-right:2.5px solid #404040;border-top:2.5px solid transparent;border-bottom:2.5px solid transparent"></div>
<div style="left:29.5px;top:549px;width:405.3px;height:8.3px;border:1px solid #a8a8a8;border-radius:1.5px;background:linear-gradient(#fbfbfb 0,#ececec 45%,#dcdcdc 55%,#cfcfcf 100%)"></div>
<div style="left:229px;top:551px;width:5.5px;height:4.2px;background:linear-gradient(90deg,#909090 0,#c8c8c8 30%,#8a8a8a 55%,#b0b0b0 100%);box-shadow:0 0 0 0.8px #f8f8f8"></div>
<div style="left:789px;top:551px;width:0;height:0;border-left:2.5px solid #404040;border-top:2.5px solid transparent;border-bottom:2.5px solid transparent"></div>
<div style="left:2px;top:561.5px;width:37px;height:14px;border:1px solid #dcdcdc;border-radius:3px;background:#f1f1f1"></div>
<div style="left:5px;top:563.5px;width:1px;height:1px;background:#a8a8a8"></div>
<div style="left:5px;top:565.7px;width:1px;height:1px;background:#a8a8a8"></div>
<div style="left:5px;top:567.9px;width:1px;height:1px;background:#a8a8a8"></div>
<div style="left:5px;top:570.1px;width:1px;height:1px;background:#a8a8a8"></div>
<div style="left:5px;top:572.3px;width:1px;height:1px;background:#a8a8a8"></div>
<svg style="position:absolute;left:11.5px;top:565.5px" width="7" height="6" viewBox="0 0 7 6"><path d="M2.6 0.8H6.2L5.6 3.2H2Z" fill="#f4f4f4" stroke="#6a6a6a" stroke-width="0.9" stroke-linejoin="round"/><path d="M1.4 2.6H5L4.4 5.2H0.8Z" fill="#f4f4f4" stroke="#6a6a6a" stroke-width="0.9" stroke-linejoin="round"/></svg>
<svg style="position:absolute;left:24px;top:564px" width="8" height="8" viewBox="0 0 8 8"><rect x="0.5" y="0.5" width="7" height="7" rx="1.2" fill="#3b6cb4" stroke="#2f5ea8" stroke-width="0.8"/><rect x="1.4" y="1.5" width="5.2" height="4" fill="#eef3fa"/><path d="M2.4 3.2L3.6 2.6L4.6 3.6L5.6 3" stroke="#6a90c8" stroke-width="0.7" fill="none"/><rect x="2.5" y="6.4" width="3" height="1" fill="#1e4a90"/></svg>
</body></html>
